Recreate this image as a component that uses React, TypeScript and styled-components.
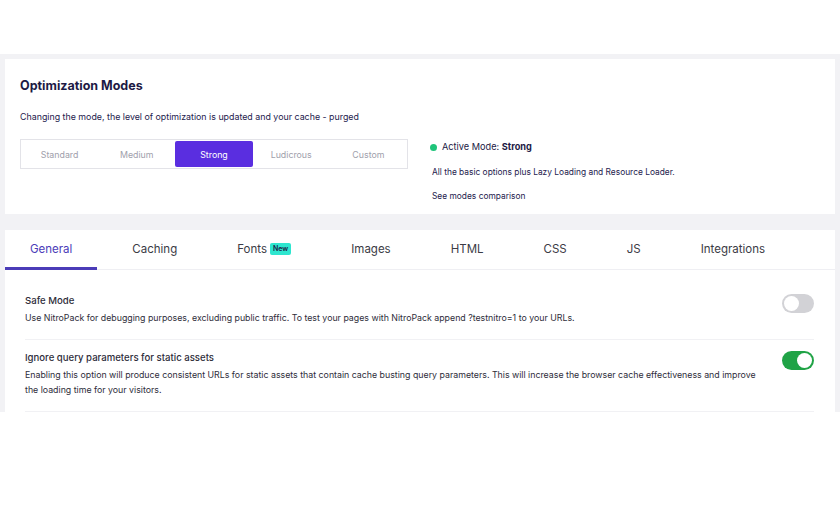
import React from "react";
import styled, { createGlobalStyle } from "styled-components";

const GlobalStyle = createGlobalStyle`
  html, body { margin: 0; padding: 0; background: #ffffff; }
  body { font-family: Inter, "Noto Sans", sans-serif; -webkit-font-smoothing: antialiased; }
  * { box-sizing: border-box; }
`;

const Page = styled.div`
  width: 840px;
  height: 508px;
  padding-top: 54px;
  background: #ffffff;
`;

const Band = styled.div`
  height: 358px;
  overflow: hidden;
  background: #f2f2f5;
  padding: 5px 5px 0 5px;
  display: flex;
  flex-direction: column;
  gap: 16px;
`;

const Card = styled.section`
  background: #ffffff;
  flex-shrink: 0;
`;

const ModesCard = styled(Card)`
  height: 155px;
  padding: 19px 15px 0 15px;
`;

const Title = styled.h2`
  margin: 0;
  font-size: 12.5px;
  font-weight: 700;
  color: #1d1a45;
  line-height: 16px;
`;

const Desc = styled.p`
  margin: 17px 0 0 0;
  font-size: 8.85px;
  color: #24214d;
  line-height: 12px;
`;

const ModeRow = styled.div`
  display: flex;
  margin-top: 16px;
  gap: 24px;
`;

const Segmented = styled.div`
  width: 388px;
  height: 30px;
  border: 1px solid #e3e3e8;
  display: grid;
  grid-template-columns: repeat(5, 1fr);
  padding: 1px 0;
`;

const Segment = styled.div<{ $active?: boolean }>`
  display: flex;
  align-items: center;
  justify-content: center;
  font-size: 8.8px;
  border-radius: 2px;
  color: ${(p) => (p.$active ? "#ffffff" : "#a0a0ab")};
  background: ${(p) => (p.$active ? "#5a2ee0" : "transparent")};
`;

const Info = styled.div`
  display: flex;
  flex-direction: column;
  padding-top: 2px;
`;

const ActiveLine = styled.div`
  display: flex;
  align-items: center;
  gap: 5px;
  font-size: 9.2px;
  color: #1d1a45;
  line-height: 12px;
  margin-left: -2px;
  b { font-weight: 700; }
`;

const Dot = styled.span`
  width: 7px;
  height: 7px;
  border-radius: 50%;
  background: #1fc47a;
`;

const InfoText = styled.div`
  font-size: 8.4px;
  color: #24214d;
  line-height: 12px;
  margin-top: 13px;
`;

const InfoLink = styled(InfoText)`
  margin-top: 12px;
`;

const SettingsCard = styled(Card)`
  height: 182px;
`;

const Tabs = styled.nav`
  height: 40px;
  display: flex;
  gap: 10px;
  border-bottom: 1px solid #efeff3;
`;

const Tab = styled.div<{ $active?: boolean }>`
  position: relative;
  display: flex;
  align-items: center;
  gap: 3px;
  padding: 0 25px 2px 25px;
  font-size: 11.5px;
  color: ${(p) => (p.$active ? "#4b3cb8" : "#3b3b45")};
  ${(p) =>
    p.$active &&
    `&::after {
      content: "";
      position: absolute;
      left: 0; right: 0; bottom: -1px;
      height: 3px;
      background: #4b3cb8;
    }`}
`;

const Badge = styled.span`
  background: #2ee6cf;
  color: #1d1a45;
  font-size: 7px;
  font-weight: 600;
  padding: 2px 3px;
  border-radius: 2px;
  line-height: 8px;
`;

const Rows = styled.div`
  padding: 0 21px 0 20px;
`;

const Row = styled.div`
  display: flex;
  align-items: flex-start;
  justify-content: space-between;
  padding: 24px 0 14px 0;
  border-bottom: 1px solid #f1f1f4;
  & + & { padding-top: 11px; }
`;

const RowText = styled.div`
  max-width: 740px;
`;

const RowTitle = styled.div`
  font-size: 9.6px;
  font-weight: 500;
  color: #2e2d3a;
  line-height: 14px;
`;

const RowDesc = styled.div`
  font-size: 8.8px;
  color: #2e2d3a;
  line-height: 15px;
  margin-top: 2px;
`;

const Toggle = styled.div<{ $on?: boolean }>`
  width: 32px;
  height: 19px;
  border-radius: 10px;
  flex-shrink: 0;
  margin-top: 0;
  background: ${(p) => (p.$on ? "#20a346" : "#d2d2d6")};
  display: flex;
  align-items: center;
  justify-content: ${(p) => (p.$on ? "flex-end" : "flex-start")};
  padding: 2px;
`;

const Knob = styled.span`
  width: 15px;
  height: 15px;
  border-radius: 50%;
  background: #ffffff;
`;

const modes = ["Standard", "Medium", "Strong", "Ludicrous", "Custom"];
const tabs = ["General", "Caching", "Fonts", "Images", "HTML", "CSS", "JS", "Integrations"];

export default function App() {
  return (
    <>
      <GlobalStyle />
      <Page>
        <Band>
          <ModesCard>
            <Title>Optimization Modes</Title>
            <Desc>Changing the mode, the level of optimization is updated and your cache - purged</Desc>
            <ModeRow>
              <Segmented>
                {modes.map((m) => (
                  <Segment key={m} $active={m === "Strong"}>
                    {m}
                  </Segment>
                ))}
              </Segmented>
              <Info>
                <ActiveLine>
                  <Dot />
                  <span>
                    Active Mode: <b>Strong</b>
                  </span>
                </ActiveLine>
                <InfoText>All the basic options plus Lazy Loading and Resource Loader.</InfoText>
                <InfoLink>See modes comparison</InfoLink>
              </Info>
            </ModeRow>
          </ModesCard>
          <SettingsCard>
            <Tabs>
              {tabs.map((t) => (
                <Tab key={t} $active={t === "General"}>
                  {t}
                  {t === "Fonts" && <Badge>New</Badge>}
                </Tab>
              ))}
            </Tabs>
            <Rows>
              <Row>
                <RowText>
                  <RowTitle>Safe Mode</RowTitle>
                  <RowDesc>
                    Use NitroPack for debugging purposes, excluding public traffic. To test your pages with NitroPack append ?testnitro=1 to your URLs.
                  </RowDesc>
                </RowText>
                <Toggle>
                  <Knob />
                </Toggle>
              </Row>
              <Row>
                <RowText>
                  <RowTitle>Ignore query parameters for static assets</RowTitle>
                  <RowDesc>
                    Enabling this option will produce consistent URLs for static assets that contain cache busting query parameters. This will increase the browser cache effectiveness and improve the loading time for your visitors.
                  </RowDesc>
                </RowText>
                <Toggle $on>
                  <Knob />
                </Toggle>
              </Row>
            </Rows>
          </SettingsCard>
        </Band>
      </Page>
    </>
  );
}
